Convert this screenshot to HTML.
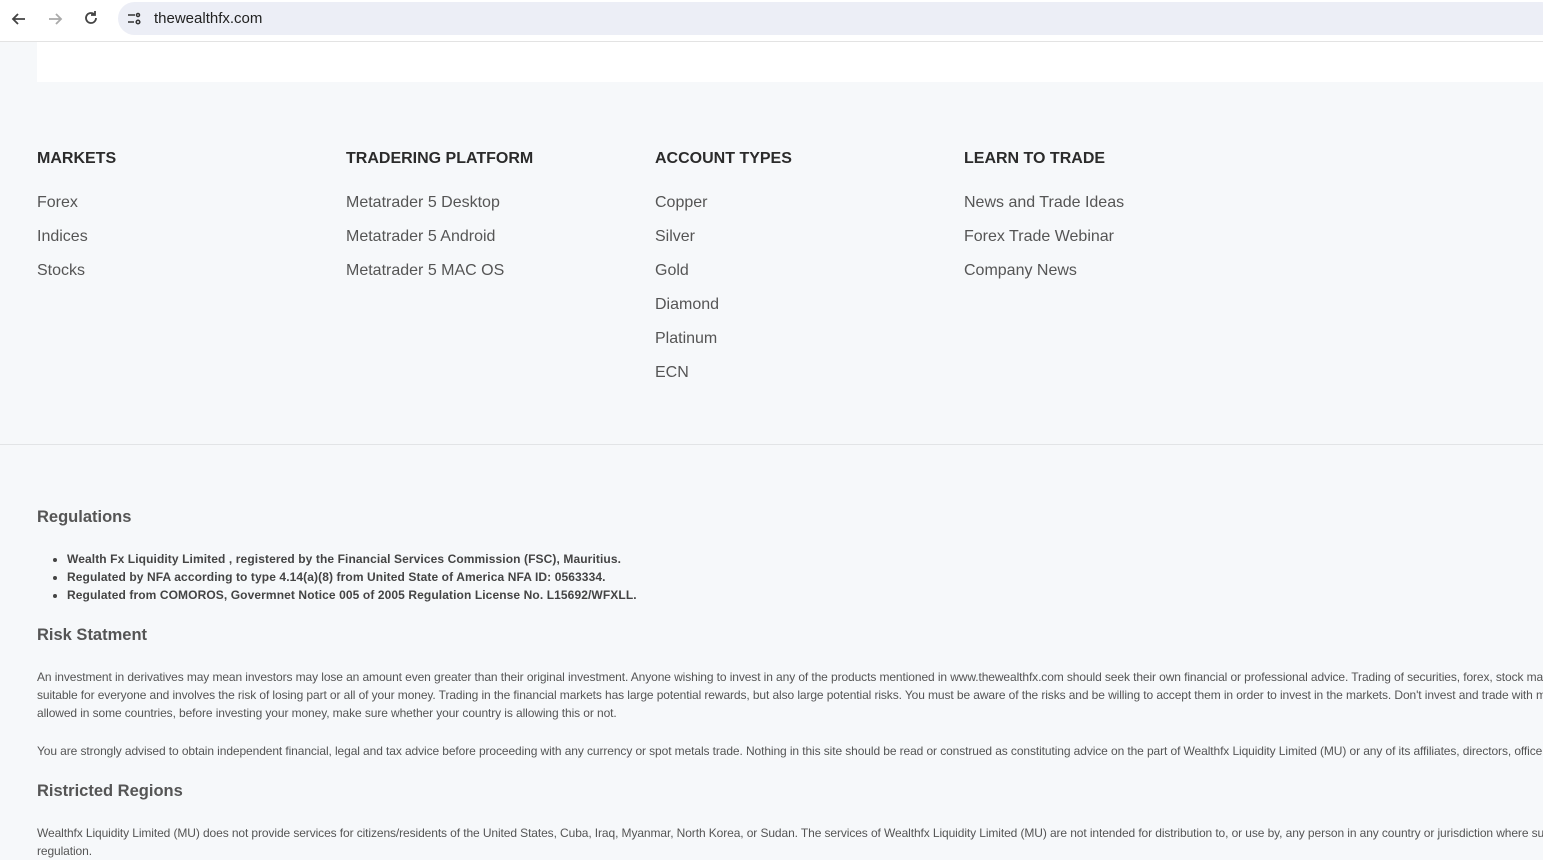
<!DOCTYPE html>
<html><head><meta charset="utf-8"><style>
body{margin:0;width:1543px;height:860px;overflow:hidden;background:#f6f8fa;font-family:"Liberation Sans",sans-serif;position:relative}
.bar{position:absolute;left:0;top:0;width:1543px;height:41px;background:#fff;border-bottom:1px solid #e3e3e3}
.url{position:absolute;left:118px;top:2px;width:1440px;height:33px;background:#eceef6;border-radius:17px}
.url span{position:absolute;left:36px;top:8px;font-size:15px;color:#222}
.card{position:absolute;left:37px;top:42px;width:1506px;height:40px;background:#fff}
.col{position:absolute;top:150px}
.col h4{margin:0 0 27px;font-size:16px;font-weight:bold;color:#2b2b2b;height:17px}
.col div{font-size:16px;color:#555;height:34px}
.hr{position:absolute;left:0;top:444px;width:1543px;height:1px;background:#e2e4e6}
.t{position:absolute;left:37px;white-space:nowrap;color:#555}
h3{position:absolute;left:37px;margin:0;font-size:16.5px;color:#555;font-weight:bold}
.s{font-size:12px;letter-spacing:-0.1px;line-height:18px;color:#555}
ul{position:absolute;left:37px;top:550px;margin:0;padding-left:30px;font-size:12px;font-weight:bold;letter-spacing:0.1px;line-height:18px;color:#444}
</style></head><body>
<div class="bar">
<svg style="position:absolute;left:10px;top:10px" width="18" height="18" viewBox="0 0 18 18" fill="none" stroke="#444" stroke-width="1.8"><path d="M15 9H3M8 4L3 9l5 5"/></svg>
<svg style="position:absolute;left:46px;top:10px" width="18" height="18" viewBox="0 0 18 18" fill="none" stroke="#aaa" stroke-width="1.8"><path d="M3 9h12M10 4l5 5-5 5"/></svg>
<svg style="position:absolute;left:82px;top:9px" width="18" height="18" viewBox="0 0 18 18" fill="none" stroke="#444" stroke-width="1.8"><path d="M14 9a5 5 0 1 1-2-4M13 2v4H9"/></svg>
<div class="url"><svg style="position:absolute;left:8px;top:9px" width="16" height="16" viewBox="0 0 16 16" fill="none" stroke="#333" stroke-width="1.5"><path d="M2 4h7M2 11h6"/><circle cx="12" cy="4" r="1.5"/><circle cx="12" cy="11" r="1.8"/></svg><span>thewealthfx.com</span></div>
</div>
<div class="card"></div>
<div class="col" style="left:37px"><h4>MARKETS</h4><div>Forex</div><div>Indices</div><div>Stocks</div></div>
<div class="col" style="left:346px"><h4>TRADERING PLATFORM</h4><div>Metatrader 5 Desktop</div><div>Metatrader 5 Android</div><div>Metatrader 5 MAC OS</div></div>
<div class="col" style="left:655px"><h4>ACCOUNT TYPES</h4><div>Copper</div><div>Silver</div><div>Gold</div><div>Diamond</div><div>Platinum</div><div>ECN</div></div>
<div class="col" style="left:964px"><h4>LEARN TO TRADE</h4><div>News and Trade Ideas</div><div>Forex Trade Webinar</div><div>Company News</div></div>
<div class="hr"></div>
<h3 style="top:508px">Regulations</h3>
<ul><li>Wealth Fx Liquidity Limited , registered by the Financial Services Commission (FSC), Mauritius.</li><li>Regulated by NFA according to type 4.14(a)(8) from United State of America NFA ID: 0563334.</li><li>Regulated from COMOROS, Govermnet Notice 005 of 2005 Regulation License No. L15692/WFXLL.</li></ul>
<h3 style="top:626px">Risk Statment</h3>
<div class="t s" style="top:668px">An investment in derivatives may mean investors may lose an amount even greater than their original investment. Anyone wishing to invest in any of the products mentioned in www.thewealthfx.com should seek their own financial or professional advice. Trading of securities, forex, stock market<br>suitable for everyone and involves the risk of losing part or all of your money. Trading in the financial markets has large potential rewards, but also large potential risks. You must be aware of the risks and be willing to accept them in order to invest in the markets. Don't invest and trade with money<br>allowed in some countries, before investing your money, make sure whether your country is allowing this or not.</div>
<div class="t s" style="top:742px">You are strongly advised to obtain independent financial, legal and tax advice before proceeding with any currency or spot metals trade. Nothing in this site should be read or construed as constituting advice on the part of Wealthfx Liquidity Limited (MU) or any of its affiliates, directors, officers</div>
<h3 style="top:782px">Ristricted Regions</h3>
<div class="t s" style="top:824px">Wealthfx Liquidity Limited (MU) does not provide services for citizens/residents of the United States, Cuba, Iraq, Myanmar, North Korea, or Sudan. The services of Wealthfx Liquidity Limited (MU) are not intended for distribution to, or use by, any person in any country or jurisdiction where such<br>regulation.</div>
</body></html>
